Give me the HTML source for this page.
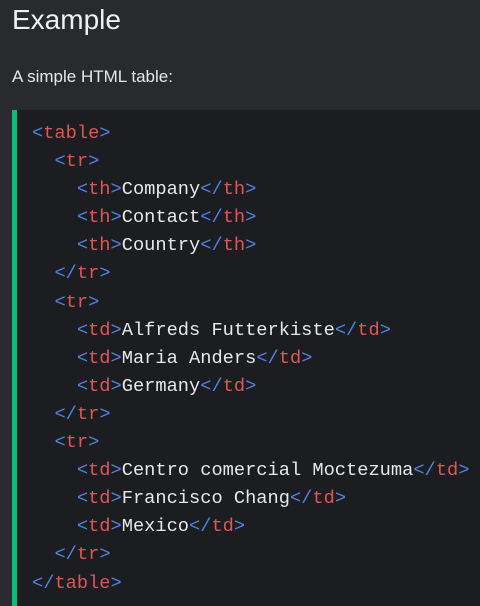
<!DOCTYPE html>
<html><head><style>
body{margin:0;width:480px;height:606px;background:#282a2e;overflow:hidden;font-family:"Liberation Sans",sans-serif;color:#e8e8e8}
h2{margin:0;position:absolute;left:12px;top:4px;font-size:28px;font-weight:normal;color:#f0f0f0}
p{margin:0;position:absolute;left:12px;top:67px;font-size:17px;color:#e8e8e8}
.code{position:absolute;left:12px;top:110px;width:468px;height:496px;background:#1b1d20;border-left:5px solid #04c17a;box-sizing:border-box}
pre{margin:0;position:absolute;left:15px;top:9px;font-family:"Liberation Mono",monospace;font-size:18.7px;line-height:28.1px;color:#e8e8e8}
.b{color:#4f82e3}.t{color:#df5656}
</style></head><body>
<h2>Example</h2>
<p>A simple HTML table:</p>
<div class="code"><pre><span class="b">&lt;</span><span class="t">table</span><span class="b">&gt;</span>
  <span class="b">&lt;</span><span class="t">tr</span><span class="b">&gt;</span>
    <span class="b">&lt;</span><span class="t">th</span><span class="b">&gt;</span>Company<span class="b">&lt;/</span><span class="t">th</span><span class="b">&gt;</span>
    <span class="b">&lt;</span><span class="t">th</span><span class="b">&gt;</span>Contact<span class="b">&lt;/</span><span class="t">th</span><span class="b">&gt;</span>
    <span class="b">&lt;</span><span class="t">th</span><span class="b">&gt;</span>Country<span class="b">&lt;/</span><span class="t">th</span><span class="b">&gt;</span>
  <span class="b">&lt;/</span><span class="t">tr</span><span class="b">&gt;</span>
  <span class="b">&lt;</span><span class="t">tr</span><span class="b">&gt;</span>
    <span class="b">&lt;</span><span class="t">td</span><span class="b">&gt;</span>Alfreds Futterkiste<span class="b">&lt;/</span><span class="t">td</span><span class="b">&gt;</span>
    <span class="b">&lt;</span><span class="t">td</span><span class="b">&gt;</span>Maria Anders<span class="b">&lt;/</span><span class="t">td</span><span class="b">&gt;</span>
    <span class="b">&lt;</span><span class="t">td</span><span class="b">&gt;</span>Germany<span class="b">&lt;/</span><span class="t">td</span><span class="b">&gt;</span>
  <span class="b">&lt;/</span><span class="t">tr</span><span class="b">&gt;</span>
  <span class="b">&lt;</span><span class="t">tr</span><span class="b">&gt;</span>
    <span class="b">&lt;</span><span class="t">td</span><span class="b">&gt;</span>Centro comercial Moctezuma<span class="b">&lt;/</span><span class="t">td</span><span class="b">&gt;</span>
    <span class="b">&lt;</span><span class="t">td</span><span class="b">&gt;</span>Francisco Chang<span class="b">&lt;/</span><span class="t">td</span><span class="b">&gt;</span>
    <span class="b">&lt;</span><span class="t">td</span><span class="b">&gt;</span>Mexico<span class="b">&lt;/</span><span class="t">td</span><span class="b">&gt;</span>
  <span class="b">&lt;/</span><span class="t">tr</span><span class="b">&gt;</span>
<span class="b">&lt;/</span><span class="t">table</span><span class="b">&gt;</span></pre></div>
</body></html>
